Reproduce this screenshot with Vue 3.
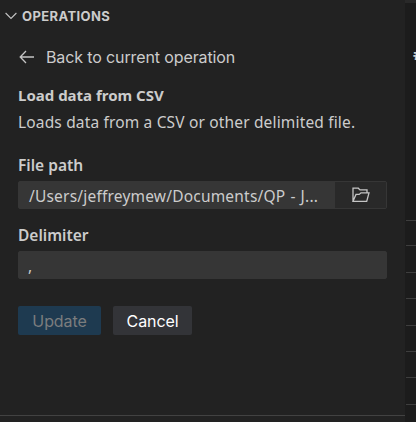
<script setup>
import { ref } from 'vue'

const filePath = ref('/Users/jeffreymew/Documents/QP - J...')
const delimiter = ref(',')
const rows = [25, 27, 26, 27, 26, 26, 27, 18]
</script>

<template>
  <div class="window">
    <aside class="sidebar">
      <header class="section-title">
        <svg class="chevron" width="12" height="8" viewBox="0 0 12 8">
          <path d="M.6 1 6 6.4 11.4 1" />
        </svg>
        <h2>OPERATIONS</h2>
      </header>
      <div class="content">
        <a class="back">
          <svg width="16" height="14" viewBox="0 0 16 14">
            <path d="M7 1 1.2 7 7 13M1.2 7H15" />
          </svg>
          <span>Back to current operation</span>
        </a>
        <h3><span>Load data from CSV</span></h3>
        <p><span>Loads data from a CSV or other delimited file.</span></p>
        <label class="path-label"><span>File path</span></label>
        <div class="field">
          <span class="value">{{ filePath }}</span>
          <button class="browse" aria-label="Browse">
            <svg width="18" height="16" viewBox="0 0 18 16">
              <path d="M1 14.3V1.2H6.3L8 2.9H15V5.8M1 14.3 4 7.4H7.2L9 5.8H17L14.7 14.3Z" />
            </svg>
          </button>
        </div>
        <label class="delimiter-label"><span>Delimiter</span></label>
        <div class="field plain">
          <span class="comma">{{ delimiter }}</span>
        </div>
        <div class="actions">
          <button class="update" disabled><span>Update</span></button>
          <button class="cancel"><span>Cancel</span></button>
        </div>
      </div>
      <footer class="next-section"></footer>
    </aside>
    <main class="grid">
      <div class="grid-head"><span>#</span></div>
      <div v-for="(h, i) in rows" :key="i" class="row" :style="{ height: h + 'px' }"></div>
    </main>
  </div>
</template>

<style>
body {
  margin: 0;
  background: #1e1e1e;
}
</style>

<style scoped>
* {
  box-sizing: border-box;
}
.window {
  display: flex;
  width: 416px;
  height: 422px;
  overflow: hidden;
  color: #cccccc;
  font-family: "Noto Sans", sans-serif;
  font-size: 15.5px;
  white-space: nowrap;
}
.sidebar {
  display: flex;
  flex-direction: column;
  width: 405px;
  flex: none;
  background: #222222;
}
svg {
  flex: none;
  fill: none;
  stroke: #c5c5c5;
  stroke-width: 1.1;
}
.section-title {
  display: flex;
  align-items: center;
  gap: 5px;
  height: 32px;
  padding-left: 5px;
}
h2 {
  margin: 0;
  font: 700 13px/18px Inter, sans-serif;
  letter-spacing: 0.4px;
}
.content {
  display: flex;
  flex-direction: column;
  flex: 1;
  padding: 13px 18px 0;
}
.back {
  display: flex;
  align-items: center;
  gap: 11px;
  height: 24px;
  padding-left: 1px;
  font: 400 16px/24px Inter, sans-serif;
  letter-spacing: -0.12px;
}
.back svg {
  stroke-width: 1.3;
}
h3,
p {
  margin: 0;
  height: 26px;
  line-height: 26px;
}
h3 {
  margin-top: 13px;
  font-size: 15px;
  font-weight: 700;
}
p {
  margin-top: 1px;
  letter-spacing: 0.16px;
}
label {
  height: 26px;
  line-height: 26px;
  font-weight: 600;
}
.path-label {
  margin-top: 17px;
}
.field {
  display: flex;
  flex: none;
  height: 28px;
  margin-top: 3px;
  border: 1px solid #363636;
  border-radius: 2px;
  background: #363636;
  line-height: 29px;
}
.value {
  flex: 1;
  padding-left: 10px;
  letter-spacing: 0.2px;
  word-spacing: 0.8px;
}
.browse {
  display: flex;
  align-items: center;
  justify-content: center;
  width: 51px;
  padding: 0;
  border: 0;
  background: #292929;
}
.browse svg {
  stroke-width: 1.3;
}
.delimiter-label {
  margin-top: 13px;
}
.comma {
  padding-left: 9px;
}
.actions {
  display: flex;
  gap: 12px;
  margin-top: 27px;
}
.actions button {
  height: 29px;
  padding: 0;
  border: 0;
  border-radius: 2px;
  font: 400 16px/31px Inter, sans-serif;
  letter-spacing: -0.1px;
}
.update {
  width: 83px;
  background: #1e3a50;
  color: #7b7d7e;
}
.cancel {
  width: 79px;
  background: #333438;
  color: #ffffff;
}
.next-section {
  height: 7px;
  border-top: 1px solid #424242;
}
.grid {
  flex: 1;
  overflow: hidden;
  background: #1c1c1c;
}
.grid-head {
  height: 220px;
  padding: 41px 0 0 8px;
  border-top: 3px solid #292929;
  font-size: 16px;
  font-weight: 700;
  line-height: 20px;
}
.row {
  margin-left: 1px;
  border-top: 1px solid #3e3e3e;
}
</style>
